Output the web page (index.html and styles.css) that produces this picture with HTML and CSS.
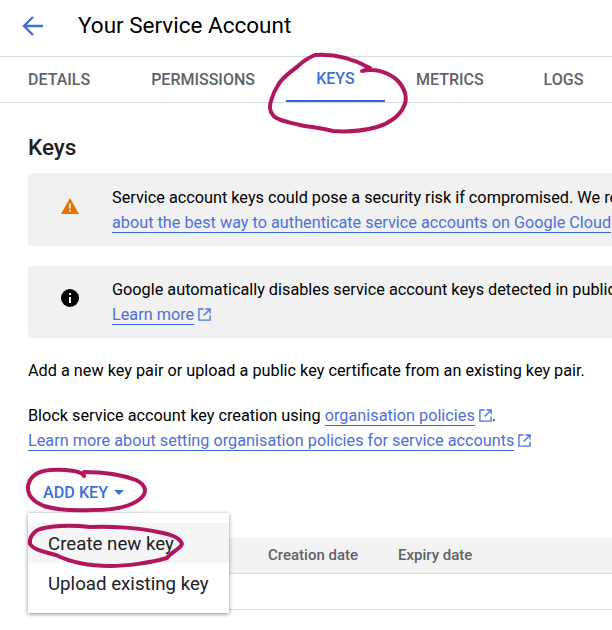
FILE: index.html
```html
<!DOCTYPE html>
<html lang="en">
<head>
    <meta charset="UTF-8">
    <meta name="viewport" content="width=device-width, initial-scale=1.0">
    <title>Your Service Account</title>
    <link rel="stylesheet" href="styles.css">
</head>
<body>

<div class="page">
    <header class="topbar">
        <svg class="back-icon" width="24" height="24" viewBox="0 0 24 24"><path d="M22 12H4M12 3l-9 9 9 9" fill="none" stroke="#3f6fd8" stroke-width="2.4"/></svg>
        <h1>Your Service Account</h1>
    </header>

    <nav class="tabs">
        <a class="tab tab-details">DETAILS</a>
        <a class="tab tab-permissions">PERMISSIONS</a>
        <a class="tab tab-keys">KEYS</a>
        <a class="tab tab-metrics">METRICS</a>
        <a class="tab tab-logs">LOGS</a>
    </nav>

    <main class="content">
        <h2>Keys</h2>

        <div class="notice notice-warning">
            <svg class="notice-icon" width="18" height="16" viewBox="0 0 18 16"><path d="M9 0L18 16H0z" fill="#e37400"/><path d="M8.1 5.5h1.8v5H8.1zM8.1 11.8h1.8v1.8H8.1z" fill="#f1f1f1"/></svg>
            <div class="notice-text">
                <p>Service account keys could pose a security risk if compromised. We recommend you avoid downloading service account keys. Learn more</p>
                <p><a class="link">about the best way to authenticate service accounts on Google Cloud</a></p>
            </div>
        </div>

        <div class="notice notice-info">
            <svg class="notice-icon" width="18" height="18" viewBox="0 0 18 18"><circle cx="9" cy="9" r="9" fill="#000"/><path d="M8 8h2v6H8zM8 4h2v2H8z" fill="#f1f1f1"/></svg>
            <div class="notice-text">
                <p>Google automatically disables service account keys detected in public repositories.</p>
                <p><a class="link">Learn more</a>
                    <svg class="ext-icon" width="13" height="13" viewBox="0 0 14 14"><path d="M6 1H1v12h12V8M8 1h5v5M13 1L6 8" fill="none" stroke="#4f78dc" stroke-width="1.5"/></svg></p>
            </div>
        </div>

        <p class="intro">Add a new key pair or upload a public key certificate from an existing key pair.</p>

        <p class="policy">Block service account key creation using <a class="link">organisation policies</a>
            <svg class="ext-icon" width="13" height="13" viewBox="0 0 14 14"><path d="M6 1H1v12h12V8M8 1h5v5M13 1L6 8" fill="none" stroke="#4f78dc" stroke-width="1.5"/></svg>.</p>
        <p class="policy"><a class="link">Learn more about setting organisation policies for service accounts</a>
            <svg class="ext-icon" width="13" height="13" viewBox="0 0 14 14"><path d="M6 1H1v12h12V8M8 1h5v5M13 1L6 8" fill="none" stroke="#4f78dc" stroke-width="1.5"/></svg></p>

        <button class="add-key" type="button">ADD KEY<span class="caret"></span></button>

        <div class="table-head">
            <span class="col-created">Creation date</span>
            <span class="col-expiry">Expiry date</span>
        </div>
        <div class="table-row"></div>
    </main>

    <div class="menu">
        <div class="menu-item menu-item-active">Create new key</div>
        <div class="menu-item">Upload existing key</div>
    </div>

    <!-- pen marks drawn over the screenshot -->
    <svg class="scribbles" width="612" height="630" viewBox="0 0 612 630">
        <path d="M315 55C330 54 350 57 370 68L362 71C375 68 388 72 397 80C405 88 408 98 404 106C400 116 388 124 377 127C362 131 345 132 333 131C320 128 310 127 300 125C288 122 276 120 273 115C268 110 270 103 272 98C274 90 278 86 280 82C285 76 290 72 297 67C302 62 308 58 315 55"/>
        <path d="M84 476C82 471 66 469 50 470C38 471 30 476 28 486C27 496 34 502 44 506C56 510 74 511 94 510C112 510 130 507 140 499C148 492 146 485 136 480C120 474 102 472 84 472"/>
        <path d="M90 527C72 525 52 526 40 529C32 532 29 539 30 544C34 550 44 552 56 555C68 561 88 566 110 566C126 566 150 563 167 558C170 553 180 549 182 544C180 537 170 534 158 532C140 528 112 526 90 527"/>
    </svg>
</div>

</body>
</html>
```

FILE: styles.css
```css
* {
    box-sizing: border-box;
}
html, body {
    margin: 0;
    height: 100%;
    overflow: hidden;
}
body {
    font-family: Roboto, 'Liberation Sans', sans-serif;
    background-color: white;
    color: #202124;
}
.page {
    position: relative;
    width: 612px;
    height: 630px;
    overflow: hidden;
}
.topbar {
    display: flex;
    align-items: center;
    height: 57px;
    padding: 0 0 4px 21px;
    border-bottom: 1px solid #dadce0;
}
.back-icon {
    margin-right: 33px;
}
h1 {
    margin: 0;
    padding-bottom: 2px;
    font-size: 22.5px;
    font-weight: 400;
    color: #000;
}
.tabs {
    display: flex;
    height: 46px;
    border-bottom: 1px solid #dadce0;
    white-space: nowrap;
}
.tab {
    display: flex;
    align-items: center;
    justify-content: center;
    font-size: 16px;
    font-weight: 500;
    color: #5f6368;
}
.tab-details {
    margin-left: 28px;
}
.tab-permissions {
    margin-left: 61px;
}
.tab-keys {
    width: 99px;
    height: 45px;
    margin-left: 31px;
    color: #3f6fd8;
    border-bottom: 2px solid #3367d6;
}
.tab-metrics {
    margin-left: 31px;
}
.tab-logs {
    margin-left: 60px;
}
.content {
    padding: 30px 0 0 28px;
}
h2 {
    margin: 0 0 12px;
    font-size: 22.5px;
    line-height: 28px;
    font-weight: 500;
    color: #202124;
}
p {
    margin: 0;
}
.notice {
    display: flex;
    width: 640px;
    background-color: #f1f1f1;
    border-radius: 4px;
    white-space: nowrap;
}
.notice-warning {
    height: 73px;
    margin-bottom: 20px;
}
.notice-info {
    height: 72px;
    margin-bottom: 20px;
}
.notice-icon {
    flex: none;
    margin: 25px 33px 0 33px;
}
.notice-info .notice-icon {
    margin-top: 23px;
}
.notice-text {
    padding-top: 12px;
    font-size: 16.25px;
    line-height: 25px;
    color: #000;
}
.notice-info .notice-text {
    padding-top: 11px;
}
.link {
    color: #4f6fd8;
    border-bottom: 1px solid #3367d6;
}
.ext-icon {
    vertical-align: -1px;
}
.intro, .policy {
    font-size: 16.25px;
    line-height: 25px;
    color: #000;
    white-space: nowrap;
}
.intro {
    margin-bottom: 20px;
}
.add-key {
    display: block;
    width: 118px;
    height: 39px;
    margin: 20px 0 26px;
    padding: 0 0 0 15px;
    text-align: left;
    background-color: white;
    border: none;
    border-radius: 4px;
    box-shadow: 0 0 3px rgba(0, 0, 0, 0.12);
    font-family: inherit;
    font-size: 16.2px;
    font-weight: 500;
    color: #3f6fd8;
}
.caret {
    display: inline-block;
    margin-left: 6px;
    vertical-align: 3px;
    border-left: 5px solid transparent;
    border-right: 5px solid transparent;
    border-top: 5px solid #3f6fd8;
}
.table-head {
    display: flex;
    align-items: center;
    height: 36px;
    padding: 0 0 2px 240px;
    background-color: #f3f3f3;
    border-bottom: 1px solid #dadce0;
    font-size: 15px;
    font-weight: 500;
    color: #5f6368;
}
.col-created {
    width: 130px;
}
.table-row {
    height: 36px;
    border-bottom: 1px solid #dadce0;
}
.menu {
    position: absolute;
    left: 28px;
    top: 513px;
    width: 201px;
    height: 100px;
    padding-top: 10px;
    background-color: white;
    box-shadow: 0 1px 4px rgba(0, 0, 0, 0.45);
}
.menu-item {
    height: 40px;
    padding-left: 20px;
    font-size: 18.7px;
    line-height: 42px;
    color: #202124;
}
.menu-item-active {
    background-color: #f5f5f5;
}
.scribbles {
    position: absolute;
    left: 0;
    top: 0;
    pointer-events: none;
}
.scribbles path {
    fill: none;
    stroke: #b0175f;
    stroke-width: 4;
    stroke-linecap: round;
    stroke-linejoin: round;
}
```
